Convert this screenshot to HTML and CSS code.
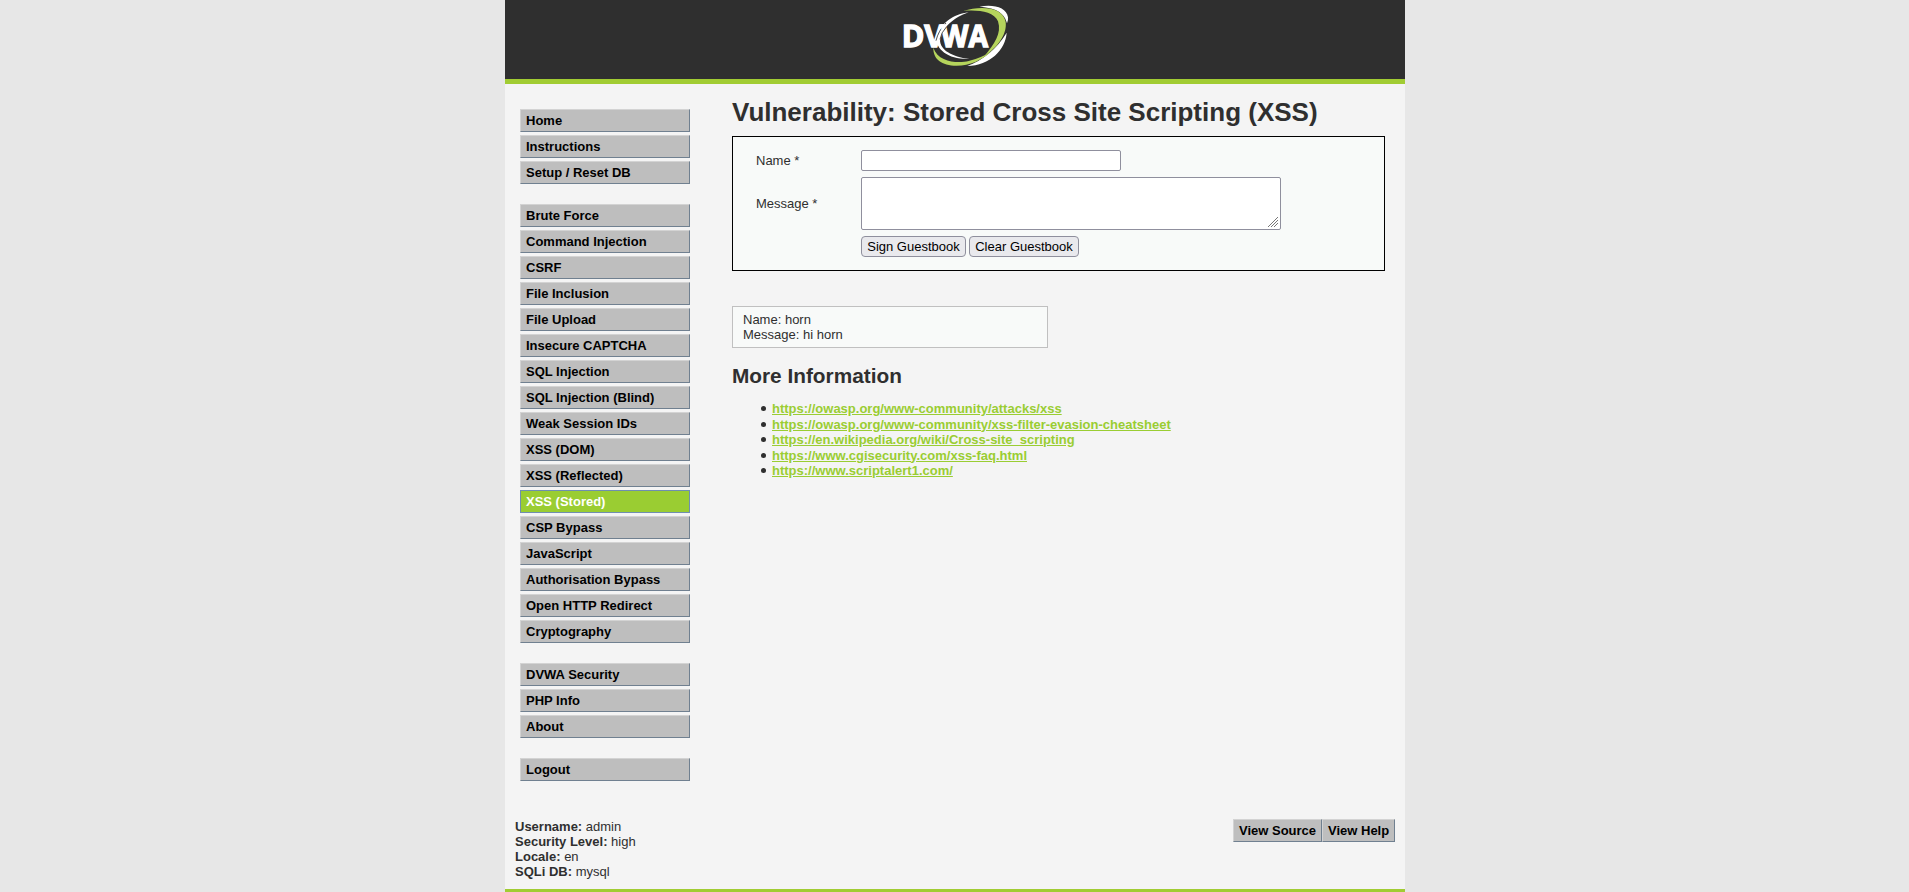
FILE: index.html
```
<!DOCTYPE html>
<html lang="en">
<head>
<meta charset="utf-8">
<title>Vulnerability: Stored Cross Site Scripting (XSS)</title>
<link rel="stylesheet" href="styles.css">
</head>
<body>
<div class="container">
  <header class="header">
    <svg class="logo" width="110" height="66" viewBox="30 0 330 198" role="img" aria-label="DVWA">
      <path fill="#fff" d="M268 20C310 12 350 22 354 52Q355 62 351 70C345 43 323 23 268 20Z"/>
      <path fill="#fff" d="M350 98C346 150 300 196 232 198C275 182 322 146 350 98Z"/>
      <path fill="#b5d45c" d="M220 33C275 15 340 22 347 66C352 104 320 145 284 167C312 134 336 100 324 64C312 34 262 29 220 33Z"/>
      <path fill="#b5d45c" d="M130 143C145 188 205 190 236 183Q272 174 303 155C275 180 240 197 200 197C155 197 129 177 130 143Z"/>
      <path fill="#fff" d="M236 37C190 43 150 70 140 112C135 150 180 180 238 177C185 170 150 150 150 120C151 87 195 50 236 37Z"/>
      <text class="logo-text" x="35" y="140" textLength="128" lengthAdjust="spacingAndGlyphs">DV</text>
      <path fill="none" stroke="#2f2f2f" stroke-width="2.5" d="M168 69Q145 92 138 122"/>
      <text class="logo-text" x="153" y="140" textLength="141" lengthAdjust="spacingAndGlyphs">WA</text>
      <path fill="none" stroke="#2f2f2f" stroke-width="2.5" d="M170 80Q153 98 150 118"/>
    </svg>
  </header>
  <div class="columns">
    <nav class="menu">
      <ul class="menu-group"><li>Home</li><li>Instructions</li><li>Setup / Reset DB</li></ul>
      <ul class="menu-group"><li>Brute Force</li><li>Command Injection</li><li>CSRF</li><li>File Inclusion</li><li>File Upload</li><li>Insecure CAPTCHA</li><li>SQL Injection</li><li>SQL Injection (Blind)</li><li>Weak Session IDs</li><li>XSS (DOM)</li><li>XSS (Reflected)</li><li class="selected">XSS (Stored)</li><li>CSP Bypass</li><li>JavaScript</li><li>Authorisation Bypass</li><li>Open HTTP Redirect</li><li>Cryptography</li></ul>
      <ul class="menu-group"><li>DVWA Security</li><li>PHP Info</li><li>About</li></ul>
      <ul class="menu-group"><li>Logout</li></ul>
    </nav>
    <main class="main">
      <h1>Vulnerability: Stored Cross Site Scripting (XSS)</h1>
      <form class="guestbook-form">
        <label for="name">Name *</label>
        <input class="field name-field" id="name" type="text">
        <label for="message">Message *</label>
        <div class="message-wrap">
          <textarea class="field message-field" id="message"></textarea>
          <svg class="grip" width="10" height="10" viewBox="0 0 10 10"><path d="M0 10L10 0M3 10L10 3M6 10L10 6" fill="none" stroke="#777" stroke-width="1"/></svg>
        </div>
        <div class="buttons"><button class="button sign" type="button">Sign Guestbook</button><button class="button clear" type="button">Clear Guestbook</button></div>
      </form>
      <div class="comment">Name: horn<br>Message: hi horn</div>
      <h2>More Information</h2>
      <ul class="links">
        <li><a href="#">https://owasp.org/www-community/attacks/xss</a></li>
        <li><a href="#">https://owasp.org/www-community/xss-filter-evasion-cheatsheet</a></li>
        <li><a href="#">https://en.wikipedia.org/wiki/Cross-site_scripting</a></li>
        <li><a href="#">https://www.cgisecurity.com/xss-faq.html</a></li>
        <li><a href="#">https://www.scriptalert1.com/</a></li>
      </ul>
    </main>
  </div>
  <div class="system">
    <div class="status"><b>Username:</b> admin<br><b>Security Level:</b> high<br><b>Locale:</b> en<br><b>SQLi DB:</b> mysql</div>
    <div class="tools"><span class="tool source">View Source</span><span class="tool help">View Help</span></div>
  </div>
  <div class="footer"></div>
</div>
</body>
</html>
```
FILE: styles.css
```
* { box-sizing: border-box; }
html { height: 100%; overflow: hidden; }
body {
  margin: 0;
  height: 892px;
  overflow: hidden;
  background: #e7e7e7;
  color: #2f2f2f;
  font: 13px/15px "Liberation Sans", Arial, sans-serif;
}
ul { margin: 0; padding: 0; list-style: none; }
.container {
  width: 900px;
  height: 892px;
  margin-left: 505px;
  background: #f4f4f4;
  display: flex;
  flex-direction: column;
}
.header {
  height: 84px;
  flex: none;
  padding-left: 395px;
  background: #2f2f2f;
  border-bottom: 5px solid #a1cc33;
}
.logo { display: block; }
.logo-text { font: bold 93px "Open Sans", sans-serif; fill: #fff; stroke: #fff; stroke-width: 4px; }
.columns { display: flex; height: 735px; flex: none; }
.menu { width: 227px; padding: 25px 0 0 15px; }
.menu-group { width: 170px; margin-bottom: 20px; display: flex; flex-direction: column; gap: 3px; }
.menu-group li {
  height: 23px;
  padding: 3px 5px 0;
  border: 1px solid;
  border-color: #d3d3d3 #708090 #708090 #d3d3d3;
  background: #bebebe;
  color: #000;
  font-weight: bold;
}
.menu-group .selected { background: #9acd32; border-color: #6f8eb0; color: #fff; }
.main { width: 653px; padding-top: 13px; }
h1 { margin: 0 0 9px; font-size: 26px; line-height: 30px; }
.guestbook-form {
  height: 135px;
  padding: 13px 0 0 23px;
  border: 1px solid #000;
  background: #f8faf9;
  display: grid;
  grid-template-columns: 105px 420px;
  grid-template-rows: 21px 53px 21px;
  row-gap: 6px;
  align-items: center;
}
.field { display: block; margin: 0; border: 1px solid #8f8f9d; border-radius: 2px; background: #fff; }
.name-field { width: 260px; height: 21px; }
.message-field { width: 420px; height: 53px; resize: none; }
.message-wrap { position: relative; }
.grip { position: absolute; right: 3px; bottom: 3px; }
.buttons { grid-column: 2; display: flex; gap: 3px; }
.button {
  height: 21px;
  padding: 0;
  border: 1px solid #8f8f9d;
  border-radius: 4px;
  background: #e9e9ed;
  color: #000;
  font: 13px/15px "Liberation Sans", Arial, sans-serif;
}
.sign { width: 105px; }
.clear { width: 110px; }
.comment {
  width: 316px;
  height: 42px;
  margin-top: 35px;
  padding: 5px 10px;
  border: 1px solid #c0c0c0;
  background: #f8faf9;
}
h2 { margin: 16px 0 13px; font-size: 20.8px; line-height: 24px; }
.links { padding-left: 29px; }
.links li { display: flex; align-items: center; gap: 6px; height: 15.5px; line-height: 15.5px; }
.links li::before { content: ""; width: 5px; height: 5px; border-radius: 50%; background: #2f2f2f; }
.links a { color: #9acd32; font-weight: bold; text-decoration: underline; }
.system { display: flex; justify-content: space-between; height: 70px; padding: 0 10px; flex: none; }
.tools { display: flex; }
.tool {
  height: 23px;
  padding: 3px 0 0 5px;
  border: 1px solid;
  border-color: #d3d3d3 #708090 #708090 #d3d3d3;
  background: #bebebe;
  color: #000;
  font-weight: bold;
  white-space: nowrap;
}
.source { width: 89px; }
.help { width: 73px; }
.footer { height: 3px; background: #a1cc33; }
```
